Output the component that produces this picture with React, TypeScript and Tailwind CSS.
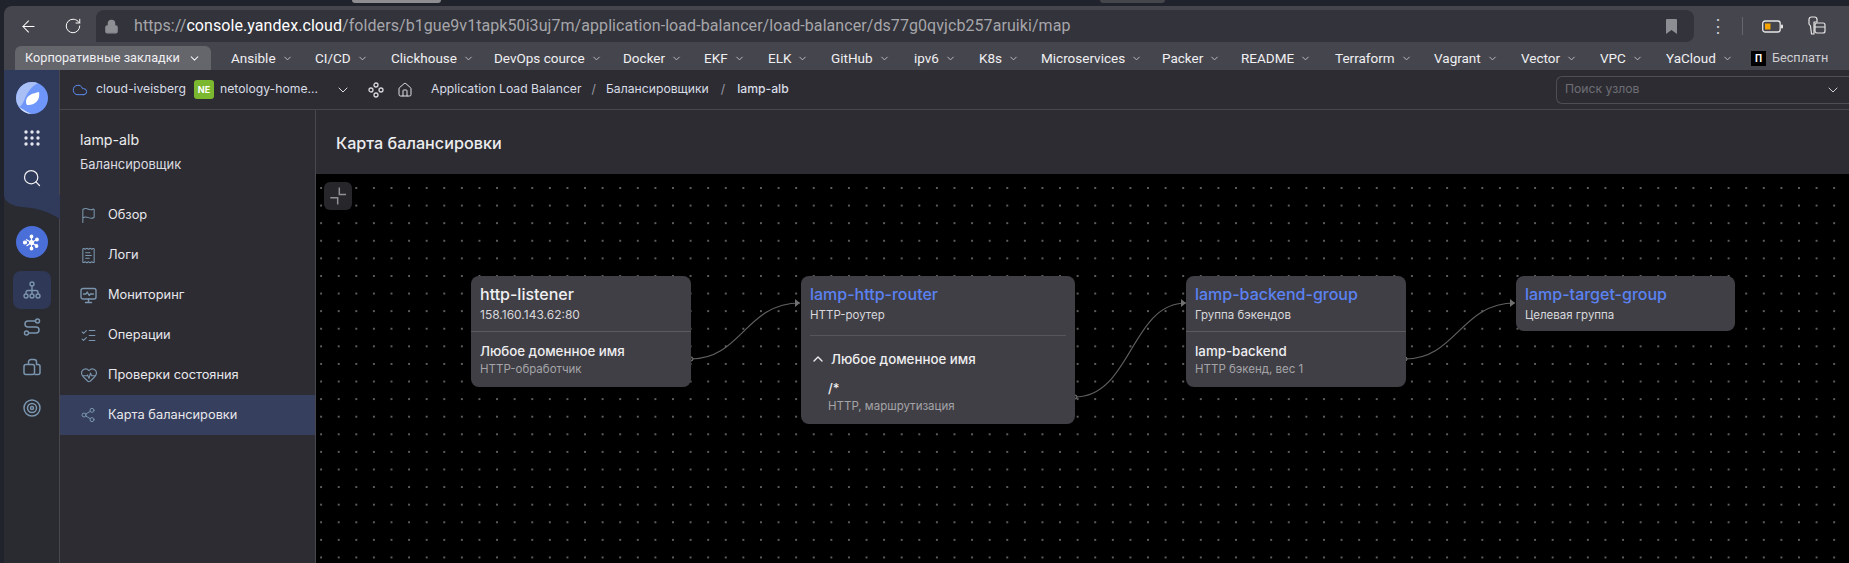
import { ArrowLeft, ChevronDown, ChevronUp, Cloud, Flag, HeartPulse, House, ListChecks, Lock, ReceiptText, RotateCw, Search, Share2 } from 'lucide-react';

const bookmarks = [
  { name: 'Ansible', cls: 'w-[84px]' },
  { name: 'CI/CD', cls: 'w-[76px]' },
  { name: 'Clickhouse', cls: 'w-[103px]' },
  { name: 'DevOps cource', cls: 'w-[129px]' },
  { name: 'Docker', cls: 'w-[81px]' },
  { name: 'EKF', cls: 'w-[64px]' },
  { name: 'ELK', cls: 'w-[63px]' },
  { name: 'GitHub', cls: 'w-[83px]' },
  { name: 'ipv6', cls: 'w-[65px]' },
  { name: 'K8s', cls: 'w-[62px]' },
  { name: 'Microservices', cls: 'w-[121px]' },
  { name: 'Packer', cls: 'w-[79px]' },
  { name: 'README', cls: 'w-[94px]' },
  { name: 'Terraform', cls: 'w-[99px]' },
  { name: 'Vagrant', cls: 'w-[87px]' },
  { name: 'Vector', cls: 'w-[79px]' },
  { name: 'VPC', cls: 'w-[66px]' },
  { name: 'YaCloud', cls: 'w-[85px]' },
];

const navItems = [
  { name: 'Обзор', icon: <Flag size={17} strokeWidth={1.5} /> },
  { name: 'Логи', icon: <ReceiptText size={17} strokeWidth={1.5} /> },
  { name: 'Мониторинг', icon: <MonitorIcon /> },
  { name: 'Операции', icon: <ListChecks size={17} strokeWidth={1.5} /> },
  { name: 'Проверки состояния', icon: <HeartPulse size={18} strokeWidth={1.5} /> },
  { name: 'Карта балансировки', icon: <Share2 size={16} strokeWidth={1.5} />, active: true },
];

function MonitorIcon() {
  return (
    <svg width="17" height="17" viewBox="0 0 17 17" fill="none" stroke="currentColor" strokeWidth="1.4" strokeLinecap="round" strokeLinejoin="round">
      <rect x="1" y="1.5" width="15" height="10.5" rx="2" />
      <path d="M3.5 7h2.5l1.2-2 2 3.5 1.2-1.5h3M8.500 12v3M5.500 15.500h6" />
    </svg>
  );
}

function LogoIcon() {
  return (
    <svg width="32" height="32" viewBox="0 0 32 32">
      <circle cx="16" cy="16" r="16" fill="#6f97fb" />
      <path d="M16 0A16 16 0 0 0 3 25C10 22 8 8 22 1.200A16 16 0 0 0 16 0z" fill="#a9c0f6" />
      <path d="M3 25A16 16 0 0 0 16 32C10 30 7 27 3 25z" fill="#d6e1fa" />
      <path d="M11 23c-2-3-1-8 3-10 3-2 6-2 9-3 1 5-1 9-4 11-3 2-6 2-8 2z" fill="#fff" />
    </svg>
  );
}

function GridIcon() {
  return (
    <svg width="16" height="16" viewBox="0 0 16 16" fill="#e4e7ef">
      {[2, 8, 14].map((y) =>
        [2, 8, 14].map((x) => <circle key={`${x}-${y}`} cx={x} cy={y} r="1.700" />),
      )}
    </svg>
  );
}

function ClusterIcon() {
  return (
    <svg width="17" height="17" viewBox="0 0 17 17" fill="none" stroke="#fff" strokeWidth="1.2">
      <path d="M8.500 8.500L8.500 2.500M8.500 8.500L3 5.500M8.500 8.500L14 5.500M8.500 8.500L3.500 12M8.500 8.500L13.500 12M8.500 8.500L8.500 14.500" />
      <circle cx="8.500" cy="8.500" r="2" fill="#fff" />
      <circle cx="8.500" cy="2.500" r="1.300" fill="#fff" />
      <circle cx="2" cy="8.500" r="1.500" fill="#fff" />
      <circle cx="14" cy="5.500" r="1.300" fill="#fff" />
      <circle cx="13.500" cy="12" r="1.300" fill="#fff" />
      <circle cx="8.500" cy="14.500" r="1.300" fill="#fff" />
    </svg>
  );
}

function TreeIcon() {
  return (
    <svg width="18" height="18" viewBox="0 0 18 18" fill="none" stroke="#7a95ad" strokeWidth="1.400">
      <circle cx="9" cy="3" r="2" />
      <circle cx="3" cy="15" r="2" />
      <circle cx="9" cy="15" r="2" />
      <circle cx="15" cy="15" r="2" />
      <path d="M9 5v8M3 13v-1.500a2 2 0 0 1 2-2h8a2 2 0 0 1 2 2V13" />
    </svg>
  );
}

function RouteIcon() {
  return (
    <svg width="18" height="18" viewBox="0 0 18 18" fill="none" stroke="#7a95ad" strokeWidth="1.500">
      <circle cx="14.500" cy="3" r="2" />
      <circle cx="3.500" cy="15" r="2" />
      <path d="M12.500 3H5a3 3 0 0 0 0 6h8a3 3 0 0 1 0 6H5.500" />
    </svg>
  );
}

function StorageIcon() {
  return (
    <svg width="18" height="18" viewBox="0 0 18 18" fill="none" stroke="#7a95ad" strokeWidth="1.500" strokeLinejoin="round">
      <rect x="1" y="6.500" width="10.500" height="10" rx="2" />
      <path d="M5.500 6.500V4A2.500 2.500 0 0 1 8 1.500h3A2.500 2.500 0 0 1 13.500 4v2.500h1.500a2 2 0 0 1 2 2v6a2 2 0 0 1-2 2h-3.500" />
    </svg>
  );
}

function TargetIcon() {
  return (
    <svg width="18" height="18" viewBox="0 0 18 18" fill="none" stroke="#7a95ad" strokeWidth="1.500">
      <circle cx="9" cy="9" r="8" />
      <circle cx="9" cy="9" r="4.500" />
      <circle cx="9" cy="9" r="1.500" />
    </svg>
  );
}

function NodesIcon() {
  return (
    <svg width="16" height="16" viewBox="0 0 16 16" fill="none" stroke="#d8d8dc" strokeWidth="1.300">
      <circle cx="8" cy="3" r="2" />
      <circle cx="3" cy="8" r="2" />
      <circle cx="13" cy="8" r="2" />
      <circle cx="8" cy="13" r="2" />
    </svg>
  );
}

function BatteryIcon() {
  return (
    <svg width="21" height="13" viewBox="0 0 21 13" fill="none">
      <rect x="0.700" y="1" width="17.500" height="11" rx="2.500" stroke="#e6e6e6" strokeWidth="1.300" />
      <rect x="3" y="3.500" width="5.500" height="6" fill="#f5a300" />
      <rect x="19" y="4.500" width="2" height="4" rx="1" fill="#e6e6e6" />
    </svg>
  );
}

function ExtensionIcon() {
  return (
    <svg width="19" height="20" viewBox="0 0 19 20" fill="none" stroke="#e6e6e6" strokeWidth="1.200" strokeLinejoin="round">
      <path d="M2 3.500C2 2 3 1 4.500 1h3C9 1 10 2 10 3.500V6H7v12H4.500L3.500 10 2 8z" />
      <rect x="8" y="7" width="10" height="10" rx="2" />
      <path d="M8 11h10" />
    </svg>
  );
}

function CollapseIcon() {
  return (
    <svg width="20" height="20" viewBox="0 0 20 20" fill="none" stroke="#8f8f94" strokeWidth="1.500">
      <path d="M11.300 1.500v7H18M2.300 11.700h7.400V18.500" />
    </svg>
  );
}

function Connector({ d, sx, sy, ex, ey }: { d: string; sx: number; sy: number; ex: number; ey: number }) {
  return (
    <g>
      <path d={d} fill="none" stroke="#606062" strokeWidth="1.200" />
      <circle cx={sx} cy={sy} r="2" fill="#222" stroke="#808083" />
      <path d={`M${ex - 5} ${ey - 4}L${ex} ${ey}L${ex - 5} ${ey + 4}z`} fill="#707072" />
    </g>
  );
}

export default function App() {
  return (
    <div className="h-[563px] w-[1849px] overflow-hidden bg-[#20232c] font-['Inter',sans-serif] text-[#e6e6e8]">
      {/* вкладки браузера */}
      <div className="flex h-1.5 items-start">
        <div className="ml-[352px] h-[3px] w-[89px] rounded-b-md bg-[#8e8e92]" />
        <div className="ml-[659px] h-[3px] w-[65px] rounded-b-md bg-[#45454c]" />
      </div>

      <div className="ml-1 flex h-[557px] flex-col overflow-hidden rounded-tl-lg">
        {/* адресная строка */}
        <div className="flex h-9 shrink-0 items-end bg-[#45454d] font-['Roboto',sans-serif]">
          <div className="flex h-8 w-[92px] items-center">
            <ArrowLeft size={19} strokeWidth={1.300} className="ml-[15px] text-white" />
            <RotateCw size={18} strokeWidth={1.300} className="ml-[26px] text-white" />
          </div>
          <div className="flex h-8 w-[1598px] items-center rounded-t-lg rounded-br-lg bg-[#33333b]">
            <Lock size={15} className="ml-2 text-[#8d8f94]" fill="#8d8f94" />
            <span className="ml-[15px] whitespace-nowrap text-[16px] tracking-[0.07px] text-[#a6a6aa]">
              https://<span className="text-white">console.yandex.cloud</span>/folders/b1gue9v1tapk50i3uj7m/application-load-balancer/load-balancer/ds77g0qvjcb257aruiki/map
            </span>
            <svg className="ml-auto mr-[17px]" width="11" height="15" viewBox="0 0 11 15" fill="#8d8e93">
              <path d="M0 1a1 1 0 0 1 1-1h9a1 1 0 0 1 1 1v14l-5.500-4L0 15z" />
            </svg>
          </div>
          <div className="flex h-8 flex-1 items-center">
            <span className="ml-[15px] text-[18px] leading-none text-[#c8c8cc]">⋮</span>
            <div className="ml-[15px] h-[18px] w-px bg-[#66666c]" />
            <div className="ml-[19px]"><BatteryIcon /></div>
            <div className="ml-[24px]"><ExtensionIcon /></div>
          </div>
        </div>

        {/* закладки */}
        <div className="flex h-7 shrink-0 items-end bg-[#45454d] pl-[11px] font-['Roboto',sans-serif] text-[13.500px] text-[#f0f0f2]">
          <div className="mr-[20px] flex h-6 w-[196px] items-center justify-center gap-2 rounded-t-md bg-[#65656c] text-[12.700px]">
            Корпоративные закладки
            <ChevronDown size={13} />
          </div>
          {bookmarks.map((b) => (
            <div key={b.name} className={`flex h-6 shrink-0 items-center gap-1.5 ${b.cls}`}>
              {b.name}
              <ChevronDown size={11} className="text-[#c6c6ca]" />
            </div>
          ))}
          <div className="flex h-6 items-center gap-1.5 whitespace-nowrap text-[12.700px]">
            <div className="flex h-[15px] w-[15px] items-center justify-center bg-black text-[10px] font-bold text-white">П</div>
            <span className="text-[#d0d0d4]">Бесплатн</span>
          </div>
        </div>

        <div className="flex min-h-0 flex-1">
          {/* левая полоса */}
          <div className="relative flex w-14 shrink-0 flex-col items-center border-r border-[#47474d] bg-[#2a2a31]">
            <div className="absolute left-0 top-0 h-[125px] w-full bg-[#303a5a]" />
            <svg className="absolute left-0 top-[125px]" width="56" height="24" viewBox="0 0 56 24" fill="#303a5a">
              <path d="M0 0H56V24C42 15 30 13 18 12 8 11 0 7 0 0z" />
            </svg>
            <div className="relative mt-3"><LogoIcon /></div>
            <div className="relative mt-4"><GridIcon /></div>
            <Search size={20} strokeWidth={1.500} className="relative mt-[22px] text-[#f0f0f2]" />
            <div className="relative mt-[38px] flex h-8 w-8 items-center justify-center rounded-full bg-[#4a6fd8]"><ClusterIcon /></div>
            <div className="relative mt-[13px] flex h-[38px] w-[38px] items-center justify-center rounded-lg bg-[#2f3856]"><TreeIcon /></div>
            <div className="relative mt-[9px]"><RouteIcon /></div>
            <div className="relative mt-[22px]"><StorageIcon /></div>
            <div className="relative mt-[23px]"><TargetIcon /></div>
          </div>

          <div className="flex min-w-0 flex-1 flex-col">
            {/* хлебные крошки */}
            <div className="flex h-10 shrink-0 items-center border-b border-[#47474d] bg-[#2d2c33] text-[12.200px] text-[#d8dde6]">
              <Cloud size={16} strokeWidth={1.500} className="ml-[12px] text-[#5d8df0]" />
              <span className="ml-[8px] w-[98px] whitespace-nowrap">cloud-iveisberg</span>
              <div className="flex h-[19px] w-5 items-center justify-center rounded-[3px] bg-[#7cb82f] text-[9px] font-bold text-white">NE</div>
              <span className="ml-1.5 w-[115px] whitespace-nowrap">netology-home...</span>
              <ChevronDown size={16} strokeWidth={1.500} />
              <div className="ml-[17px]"><NodesIcon /></div>
              <House size={16} strokeWidth={1.500} className="ml-[13px] text-[#e0e0e4]" />
              <span className="ml-[18px] whitespace-nowrap">Application Load Balancer</span>
              <span className="mx-[10px] text-[#9a9aa0]">/</span>
              <span className="whitespace-nowrap">Балансировщики</span>
              <span className="mx-[12px] text-[#9a9aa0]">/</span>
              <span className="whitespace-nowrap font-medium">lamp-alb</span>
              <div className="ml-auto flex h-7 w-[293px] items-center rounded-l-md border border-r-0 border-[#4e4e54] pl-2 text-[#6e6e74]">
                Поиск узлов
                <ChevronDown size={16} strokeWidth={1.500} className="ml-auto mr-2 text-[#cfcfd3]" />
              </div>
            </div>

            <div className="flex min-h-0 flex-1">
              {/* меню балансировщика */}
              <div className="w-[256px] shrink-0 border-r border-[#47474d] bg-[#2d2c33]">
                <div className="pl-5 pt-[20px]">
                  <div className="text-[14.200px] leading-[20px] text-[#ececee]">lamp-alb</div>
                  <div className="mt-[5px] text-[12.900px] leading-[20px] text-[#dcdce0]">Балансировщик</div>
                </div>
                <div className="mt-[20px]">
                  {navItems.map((item) => (
                    <div key={item.name} className={`flex h-10 items-center pl-[20px] text-[12.800px] ${item.active ? 'bg-[#363f5e]' : ''}`}>
                      <span className="flex w-[28px] text-[#7a95ad]">{item.icon}</span>
                      <span className="text-[#e8e8ec]">{item.name}</span>
                    </div>
                  ))}
                </div>
              </div>

              <div className="flex min-w-0 flex-1 flex-col">
                <div className="flex h-[64px] shrink-0 items-center bg-[#2d2c33] pl-5 pt-0.5 text-[16.200px] font-medium text-[#ececee]">
                  Карта балансировки
                </div>

                {/* карта */}
                <div className="relative flex-1 bg-black bg-[radial-gradient(circle,#5e5e60_0.800px,transparent_1.100px)] bg-[length:17.600px_17.600px] bg-[position:-3.700px_5.200px]">
                  <div className="absolute left-2 top-2 flex h-7 w-7 items-center justify-center rounded-md bg-[#27272b]">
                    <CollapseIcon />
                  </div>

                  <svg className="absolute inset-0" width="1533" height="389">
                    <Connector d="M375 185C425 185 430 129 484 129" sx={375} sy={185} ex={484} ey={129} />
                    <Connector d="M759 223C815 223 815 129 870 129" sx={759} sy={223} ex={870} ey={129} />
                    <Connector d="M1089 185C1140 185 1145 129 1199 129" sx={1089} sy={185} ex={1199} ey={129} />
                  </svg>

                  {/* узлы */}
                  <div className="absolute left-[155px] top-[102px] h-[111px] w-[220px] rounded-lg bg-[#403f45]">
                    <div className="h-[56px] border-b border-[#5a5a5f] px-[9px] pt-[6px]">
                      <div className="text-[16px] font-medium leading-[25px] text-[#f0f0f2]">http-listener</div>
                      <div className="text-[12px] leading-[16px] text-[#d8d8dc]">158.160.143.62:80</div>
                    </div>
                    <div className="px-[9px] pt-[9px]">
                      <div className="text-[13.300px] font-medium leading-[20px] text-[#eeeef0]">Любое доменное имя</div>
                      <div className="text-[11.500px] leading-[16px] text-[#a4a4a8]">HTTP-обработчик</div>
                    </div>
                  </div>

                  <div className="absolute left-[485px] top-[102px] h-[148px] w-[274px] rounded-lg bg-[#403f45] px-[9px]">
                    <div className="h-[60px] border-b border-[#55555a] pt-[6px]">
                      <div className="text-[16px] font-medium leading-[25px] text-[#5b82f2]">lamp-http-router</div>
                      <div className="text-[11.500px] leading-[16px] text-[#d8d8dc]">HTTP-роутер</div>
                    </div>
                    <div className="flex items-center pt-[13px] text-[13.300px] font-medium leading-[20px] text-[#eeeef0]">
                      <ChevronUp size={16} className="mr-[5px] text-[#eeeef0]" />
                      Любое доменное имя
                    </div>
                    <div className="pl-[18px] pt-[9px]">
                      <div className="text-[13px] font-medium leading-[20px] text-[#eeeef0]">/*</div>
                      <div className="text-[11.500px] leading-[16px] text-[#a4a4a8]">HTTP, маршрутизация</div>
                    </div>
                  </div>

                  <div className="absolute left-[870px] top-[102px] h-[111px] w-[220px] rounded-lg bg-[#403f45]">
                    <div className="h-[56px] border-b border-[#5a5a5f] px-[9px] pt-[6px]">
                      <div className="text-[16px] font-medium leading-[25px] text-[#5b82f2]">lamp-backend-group</div>
                      <div className="text-[11.500px] leading-[16px] text-[#d8d8dc]">Группа бэкендов</div>
                    </div>
                    <div className="px-[9px] pt-[9px]">
                      <div className="text-[13.300px] font-medium leading-[20px] text-[#eeeef0]">lamp-backend</div>
                      <div className="text-[11.500px] leading-[16px] text-[#a4a4a8]">HTTP бэкенд, вес 1</div>
                    </div>
                  </div>

                  <div className="absolute left-[1200px] top-[102px] h-[55px] w-[219px] rounded-lg bg-[#403f45] px-[9px] pt-[6px]">
                    <div className="text-[16px] font-medium leading-[25px] text-[#5b82f2]">lamp-target-group</div>
                    <div className="text-[11.500px] leading-[16px] text-[#d8d8dc]">Целевая группа</div>
                  </div>
                </div>
              </div>
            </div>
          </div>
        </div>
      </div>
    </div>
  );
}
